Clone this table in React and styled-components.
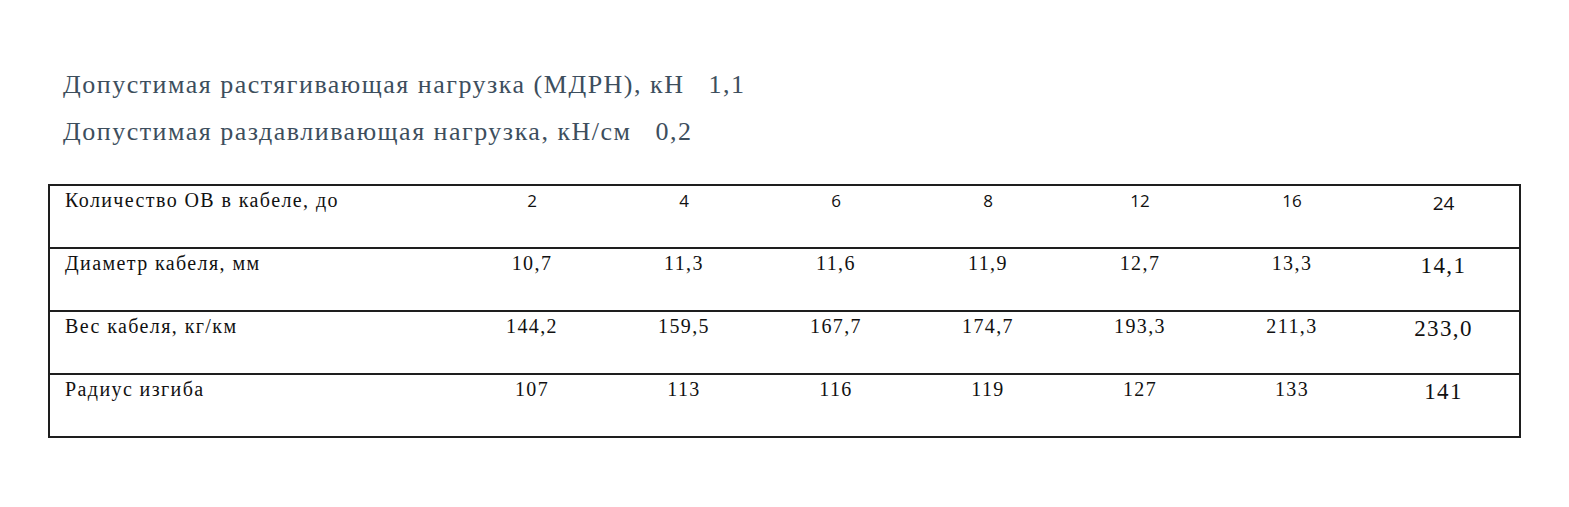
import React from 'react';
import styled, { createGlobalStyle } from 'styled-components';

const GlobalStyle = createGlobalStyle`
  body {
    margin: 0;
    background: #ffffff;
  }
`;

const specs = [
  { label: 'Допустимая растягивающая нагрузка (МДРН), кН', value: '1,1' },
  { label: 'Допустимая раздавливающая нагрузка, кН/см', value: '0,2' },
];

const rows = [
  { label: 'Количество ОВ в кабеле, до', sans: true, values: ['2', '4', '6', '8', '12', '16', '24'] },
  { label: 'Диаметр кабеля, мм', values: ['10,7', '11,3', '11,6', '11,9', '12,7', '13,3', '14,1'] },
  { label: 'Вес кабеля, кг/км', values: ['144,2', '159,5', '167,7', '174,7', '193,3', '211,3', '233,0'] },
  { label: 'Радиус изгиба', values: ['107', '113', '116', '119', '127', '133', '141'] },
];

const App = () => {
  return (
    <Page>
      <GlobalStyle />
      <Specs>
        {specs.map((s) => (
          <SpecLine key={s.label}>
            {s.label}
            <SpecValue>{s.value}</SpecValue>
          </SpecLine>
        ))}
      </Specs>

      <Table>
        <colgroup>
          <col style={{ width: 407 }} />
          {rows[0].values.map((_, i) => (
            <col key={i} style={{ width: 152 }} />
          ))}
        </colgroup>
        <tbody>
          {rows.map((row) => (
            <Row key={row.label}>
              <LabelCell>{row.label}</LabelCell>
              {row.values.map((v, i) => (
                <ValueCell key={i} $sans={row.sans} $last={i === row.values.length - 1}>
                  {v}
                </ValueCell>
              ))}
            </Row>
          ))}
        </tbody>
      </Table>
    </Page>
  );
};

export default App;

const Page = styled.div`
  padding: 70px 0 0 48px;
  width: 1471px;
`;

const Specs = styled.div`
  padding-left: 15px;
  display: flex;
  flex-direction: column;
  gap: 18px;
  margin-bottom: 38px;
`;

const SpecLine = styled.div`
  font-family: 'Liberation Serif', serif;
  font-size: 26px;
  line-height: 29px;
  letter-spacing: 1.5px;
  color: #3d4e5d;
  white-space: pre;
`;

const SpecValue = styled.span`
  margin-left: 24px;
`;

const Table = styled.table`
  border-collapse: collapse;
  table-layout: fixed;
  width: 1471px;
  border: 2px solid #1e1e1e;
`;

const Row = styled.tr`
  height: 63px;
  border-bottom: 2px solid #1e1e1e;
`;

const LabelCell = styled.td`
  vertical-align: top;
  padding: 3px 0 0 15px;
  font-family: 'Liberation Serif', serif;
  font-size: 20px;
  letter-spacing: 1.4px;
  color: #111;
  white-space: nowrap;
`;

const ValueCell = styled.td`
  vertical-align: top;
  text-align: center;
  padding: ${(p) => (p.$last ? '4px' : '3px')} 0 0 0;
  font-family: ${(p) => (p.$sans ? "'Open Sans', sans-serif" : "'Liberation Serif', serif")};
  font-size: ${(p) => (p.$last ? (p.$sans ? '19px' : '23px') : p.$sans ? '17px' : '20px')};
  letter-spacing: ${(p) => (p.$sans ? '0' : '1.4px')};
  color: #111;
`;
